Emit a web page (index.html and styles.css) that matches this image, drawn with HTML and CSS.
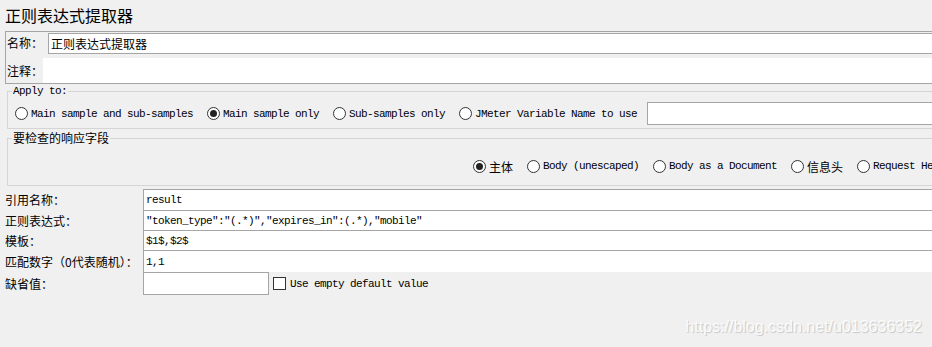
FILE: index.html
```html
<!doctype html>
<html lang="zh-CN">
<head>
	<meta charset="UTF-8">
	<title>正则表达式提取器</title>
	<link rel="stylesheet" href="styles.css">
</head>
<body>
<div class="title">正则表达式提取器</div>
<div class="info">
	<div class="info-row name-row">
		<span class="info-label">名称：</span>
		<div class="name-field">正则表达式提取器</div>
	</div>
	<div class="info-row comment-row">
		<span class="info-label">注释：</span>
		<div class="comment-field"></div>
	</div>
</div>
<fieldset class="group apply-group">
	<legend class="mono">Apply to:</legend>
	<div class="radios mono">
		<label class="opt"><span class="radio"></span>Main sample and sub-samples</label>
		<label class="opt"><span class="radio on"></span>Main sample only</label>
		<label class="opt"><span class="radio"></span>Sub-samples only</label>
		<label class="opt opt-last"><span class="radio"></span>JMeter Variable Name to use</label>
		<div class="var-field"></div>
	</div>
</fieldset>
<fieldset class="group check-group">
	<legend>要检查的响应字段</legend>
	<div class="radios body-radios">
		<label class="opt"><span class="radio on"></span>主体</label>
		<label class="opt mono"><span class="radio"></span>Body (unescaped)</label>
		<label class="opt mono"><span class="radio"></span>Body as a Document</label>
		<label class="opt"><span class="radio"></span>信息头</label>
		<label class="opt mono"><span class="radio"></span>Request Headers</label>
	</div>
</fieldset>
<div class="form">
	<div class="form-label">引用名称：</div>
	<div class="form-field mono">result</div>
	<div class="form-label">正则表达式：</div>
	<div class="form-field mono">"token_type":"(.*)","expires_in":(.*),"mobile"</div>
	<div class="form-label">模板：</div>
	<div class="form-field mono">$1$,$2$</div>
	<div class="form-label">匹配数字（0代表随机）：</div>
	<div class="form-field mono">1,1</div>
	<div class="form-label">缺省值：</div>
	<div class="default-row">
		<div class="default-field"></div>
		<label class="check-opt mono"><span class="checkbox"></span>Use empty default value</label>
	</div>
</div>
<div class="watermark">https://blog.csdn.net/u013636352</div>
</body>
</html>
```

FILE: styles.css
```css
html{overflow:hidden;}
body{margin:0;min-width:1100px;background:#f0f0f0;color:#000;font:12px "Noto Sans CJK SC",sans-serif;}
.mono{font-family:"Liberation Mono",monospace;font-size:11px;letter-spacing:-0.6px;}

.title{height:31px;line-height:31px;padding-left:5px;font-size:16px;}

/* name / comment box */
.info{margin-left:5px;height:51px;border:1px solid #a5a5a5;border-right:0;}
.info-row{display:flex;}
.info-label{padding-left:1px;white-space:nowrap;}
.name-row{height:22px;}
.name-row .info-label{width:41px;line-height:22px;}
.name-field{flex:1;margin-top:1px;height:19px;line-height:19px;padding-left:2px;border:1px solid #a5a5a5;border-right:0;background:#fff;}
.comment-row{margin-top:4px;height:25px;}
.comment-row .info-label{width:36px;line-height:25px;}
.comment-field{flex:1;background:#fff;}

/* groups */
.group{margin:0 0 0 7px;border:1px solid #d5d5d5;border-right:0;min-width:0;}
.group legend{margin-left:-3px;padding:0 1px;}
.apply-group{padding:3px 0 3px 7px;}
.apply-group legend{line-height:15px;}
.check-group{margin-top:1px;padding:12px 0 11px 7px;}
.check-group legend{line-height:16px;}
.radios{display:flex;align-items:center;white-space:nowrap;}
.body-radios{height:16px;padding-left:458px;}
.opt{display:inline-flex;align-items:center;margin-right:14px;}
.opt-last{margin-right:10px;}
.radio{display:inline-flex;align-items:center;justify-content:center;box-sizing:border-box;width:13px;height:13px;margin-right:3px;border:1px solid #333;border-radius:50%;background:#fff;}
.radio.on::after{content:"";width:7px;height:7px;border-radius:50%;background:#222;}
.var-field{flex:1;height:21px;border:1px solid #a5a5a5;border-right:0;background:#fff;}

/* fields */
.form{margin-top:3px;display:grid;grid-template-columns:143px 1fr;grid-template-rows:21px 20px 20px 22px 23px;}
.form-label{display:flex;align-items:center;padding-left:5px;white-space:nowrap;}
.form-field{display:flex;align-items:center;padding-left:2px;border-top:1px solid #a5a5a5;border-left:1px solid #a5a5a5;background:#fff;white-space:nowrap;}
.default-row{display:flex;align-items:center;}
.default-field{box-sizing:border-box;width:126px;height:23px;border:1px solid #a5a5a5;background:#fff;}
.check-opt{display:inline-flex;align-items:center;margin-left:4px;}
.checkbox{box-sizing:border-box;width:13px;height:13px;margin-right:4px;border:1px solid #333;background:#fff;}

.watermark{position:absolute;right:10px;top:318px;font:16px/18px "Liberation Sans",Arial,sans-serif;color:rgba(255,255,255,0.9);text-shadow:1px 1px 1px rgba(0,0,0,0.18);}
```
